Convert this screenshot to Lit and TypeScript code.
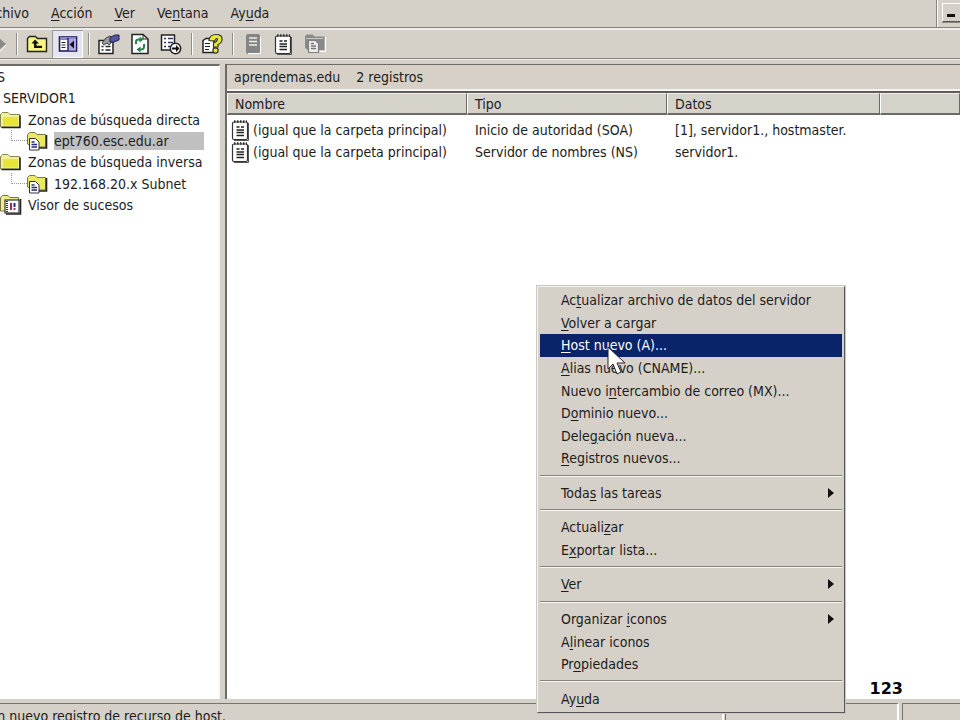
import { LitElement, html, css, svg } from "lit";
import { customElement } from "lit/decorators.js";
import { classMap } from "lit/directives/class-map.js";

const icons: Record<string, unknown> = {
  forward: svg`<path d="M-3 3 6 11 -3 19z" fill="#8a8a86"/><path d="M6 12-1 19.500" stroke="#fff" fill="none"/>`,
  up: svg`<path d="M1.500 18.500V5.500l2-2h6l2 2h9v13z" fill="#f7f583" stroke="#222" stroke-width="1.400"/><path d="M9 6.500 5.500 10.500h2.500v4.500h8v-2.200h-5.500v-2.300h2.500z" fill="#111"/>`,
  tree: svg`<rect x="2.500" y="4" width="17" height="14" fill="#fff" stroke="#1c1c5a" stroke-width="1.600"/><rect x="3" y="4" width="16" height="3" fill="#8484c8"/><rect x="11" y="6" width="8" height="11.500" fill="#a9a9dd"/><path d="M11 5v13" stroke="#1c1c5a" stroke-width="1.400"/><path d="M4.500 9.500h4M4.500 12h4M4.500 14.500h4" stroke="#223"/><path d="M17 7.500v8l-4.500-4z" fill="#111"/>`,
  props: svg`<path d="M1 7.500h14v13H1z" fill="#fff" stroke="#222" stroke-width="1.500"/><path d="M3.500 13.500h2M3.500 17h2M7.500 13.500h5M7.500 17h5" stroke="#222" stroke-width="1.500"/><path d="M4 10 8 5l4-2 3 2-1 4-3 3-2-2-3 2z" fill="#999" stroke="#444"/><path d="M12 4.500l5-2.500h4v5l-5 2-4 0z" fill="#56569e" stroke="#1d1d55"/>`,
  refresh: svg`<path d="M3 1.500h11l5 4.500v14.500H3z" fill="#fff" stroke="#222" stroke-width="1.500"/><path d="M14 1.500v4.500h5" fill="none" stroke="#222"/><path d="M7 11V8.500q0-2 3-2h1M15 11v3q0 2.500-4 2.500" fill="none" stroke="#208348" stroke-width="2"/><path d="M10.500 3.500v6l4-3zM11.500 13.500v6l-4-3z" fill="#208348"/>`,
  exportList: svg`<path d="M1.500 2h13v15h-13z" fill="#fff" stroke="#222" stroke-width="1.500"/><path d="M4 5.500h2M4 9.500h2M4 13.500h2M8 5.500h5M8 9.500h5M8 13.500h3" stroke="#33336e" stroke-width="1.500"/><circle cx="15.500" cy="15.500" r="5.200" fill="#fff" stroke="#222" stroke-width="1.500"/><path d="M12 14.500h4v-2.500l3.500 3.500-3.500 3.500V16.500h-4z" fill="#111"/>`,
  help: svg`<path d="M2 7.500 5 5.500h8v14H2z" fill="#fff" stroke="#222" stroke-width="1.500"/><path d="M4 10.500h5M4 13.500h5M4 16.500h4" stroke="#222"/><path d="M8 7.500q.5-6 7-6t6 5q0 3.500-4 5v2.500h-4.500v-4q3.500-1 4-3.500-.5-2-2 0l-1 1.500z" fill="#e8e92f" stroke="#333" stroke-width="1.200"/><circle cx="14.500" cy="17.500" r="2.600" fill="#e8e92f" stroke="#333" stroke-width="1.200"/>`,
  server: svg`<rect x="4" y="1" width="14" height="20" rx="2" fill="#858585"/><path d="M7 5h8M7 8.500h8M7 12h8" stroke="#ecece8" stroke-width="1.300"/><path d="M18.500 4v16.500H6" fill="none" stroke="#fff"/>`,
  record: svg`<rect x="2.500" y="3" width="15" height="17.500" rx="1.500" fill="#fff" stroke="#333" stroke-width="1.200"/><path d="M4 2.500h13" stroke="#333" stroke-width="2.500" stroke-dasharray="1.500 1.500"/><path d="M6.500 8h3M11 8h3M6.500 11h7.500M6.500 13.500h7.500M6.500 16.500h7.500" stroke="#222" stroke-width="1.400"/><path d="M18.500 4v17.500H4" fill="none" stroke="#555"/>`,
  zone: svg`<path d="M21.500 4v14.500H16" fill="none" stroke="#fff"/><path d="M1 15V3.500l1.500-2h6l2 2h10V17H4z" fill="#8a8a8a"/><path d="M2 5.500h17" stroke="#c8c8c4"/><path d="M4.500 7.500h7l3 3v9h-10z" fill="#eee" stroke="#808080" stroke-width="1.200"/><path d="M7 10.500h3M7 13h5M7 15.500h5" stroke="#777" stroke-width="1.300"/>`,
  folder: svg`<path d="M.5 16V4q0-1 1-1.500l1-1h5.500l2 2h9.500V16z" fill="#f1f198" stroke="#858555"/><path d="M3 6h15v8.500H3z" fill="#e5e437"/><path d="M20 4.500V16.500H1.500" fill="none" stroke="#222" stroke-width="1.600"/>`,
  zoneFolder: svg`<path d="M.5 13V3.500l2-2H8l2 2h8.500V16H6z" fill="#e9e866" stroke="#77774a"/><path d="M19.500 4v13H9" fill="none" stroke="#222" stroke-width="1.600"/><path d="M2.500 7.500h6l3.500 3.500v8H2.500z" fill="#fff" stroke="#333"/><path d="M4.500 11h3M4.500 13.500h5.500M4.500 16h5.500" stroke="#26267a" stroke-width="1.300"/>`,
  events: svg`<path d="M.5 16V2.500l2-2H8l2 2h8.500V16z" fill="#efee86" stroke="#77774a"/><path d="M20.500 4v15H6" fill="none" stroke="#222" stroke-width="1.600"/><rect x="5" y="5" width="14" height="13" fill="#fff" stroke="#333" stroke-width="1.200"/><path d="M7 6v12" stroke="#333" stroke-width="2" stroke-dasharray="1 1"/><path d="M11 8v7" stroke="#9b2d5d" stroke-width="2"/><path d="M14.500 8v4" stroke="#26267a" stroke-width="2"/><path d="M14.500 13v2" stroke="#9b2d5d" stroke-width="2"/>`,
};

const icon = (name: string, w = 22, h = 22) =>
  html`<svg width=${w} height=${h} viewBox="0 0 ${w} ${h}" aria-hidden="true">${icons[name]}</svg>`;

/* "_" marks the access key that follows it */
const label = (text: string) => {
  const at = text.indexOf("_");
  return at < 0
    ? html`<span>${text}</span>`
    : html`<span>${text.slice(0, at)}<u>${text[at + 1]}</u>${text.slice(at + 2)}</span>`;
};

interface Entry { text: string; sub?: boolean; active?: boolean }

const groups: Entry[][] = [
  [
    { text: "Ac_tualizar archivo de datos del servidor" },
    { text: "_Volver a cargar" },
    { text: "_Host nuevo (A)...", active: true },
    { text: "_Alias nuevo (CNAME)..." },
    { text: "Nuevo i_ntercambio de correo (MX)..." },
    { text: "D_ominio nuevo..." },
    { text: "Dele_gación nueva..." },
    { text: "_Registros nuevos..." },
  ],
  [{ text: "Toda_s las tareas", sub: true }],
  [{ text: "Actuali_zar" }, { text: "E_xportar lista..." }],
  [{ text: "_Ver", sub: true }],
  [{ text: "Organizar _iconos", sub: true }, { text: "A_linear iconos" }, { text: "Pr_opiedades" }],
  [{ text: "Ay_uda" }],
];

@customElement("context-menu")
class ContextMenu extends LitElement {
  static styles = css`
    :host {
      display: flex; flex-direction: column; box-sizing: border-box;
      width: 310px; height: 429px; padding: 2px; background: #d5d0c8;
      border: 2px solid; border-color: #f6f4f0 #56565a #56565a #f6f4f0;
      outline: 1px solid #c9c7c2; outline-offset: -1px;
    }
    button {
      flex: 1; display: flex; align-items: center; justify-content: space-between;
      min-height: 0; padding: 0 7px 0 21px; border: 0; background: none;
      font: inherit; color: #1c1c1c; text-align: left; white-space: nowrap;
    }
    .active { background: #0a246a; color: #fff; }
    hr {
      flex: none; width: 100%; height: 2px; margin: 5px 0; border: 0;
      background: linear-gradient(#85827c 50%, #f8f7f4 50%);
    }
    u { text-underline-offset: 2px; }
  `;
  render() {
    return groups.map((group, i) => html`
      ${i ? html`<hr />` : ""}
      ${group.map((e) => html`
        <button role="menuitem" class=${classMap({ active: !!e.active })}>
          ${label(e.text)}
          ${e.sub ? html`<svg width="8" height="12" aria-hidden="true"><path d="M1 1 7 6 1 11z" fill="#111" /></svg>` : ""}
        </button>`)}`);
  }
}

const records = [
  ["(igual que la carpeta principal)", "Inicio de autoridad (SOA)", "[1], servidor1., hostmaster."],
  ["(igual que la carpeta principal)", "Servidor de nombres (NS)", "servidor1."],
];

@customElement("app-root")
class AppRoot extends LitElement {
  static styles = css`
    :host {
      display: flex; flex-direction: column; position: relative; overflow: hidden;
      height: 100vh; background: #d5d1c9; color: #1c1c1c;
      font: 14px/16px "DejaVu Sans Condensed", "Noto Sans", sans-serif;
    }
    button { font: inherit; color: inherit; background: none; border: 0; padding: 0; white-space: nowrap; }
    svg { flex: none; display: block; }
    u { text-underline-offset: 2px; }
    .menubar { display: flex; height: 27px; border-bottom: 1px solid #85837d; flex: none; }
    .menus { display: flex; flex: 1; gap: 22px; padding-bottom: 2px; border-right: 1px solid #85837d; }
    .cut { display: flex; justify-content: flex-end; align-items: center; overflow: hidden; }
    .first { width: 29px; }
    .controls { width: 18px; padding-left: 4px; border-left: 1px solid #fff; overflow: hidden; }
    .minimize {
      display: flex; align-items: flex-end; width: 22px; height: 19px; margin-top: 3px; padding: 0 0 4px 4px;
      border: 1px solid; border-color: #fff #555 #555 #fff; box-shadow: 0 1px #8a8882;
    }
    .toolbar {
      display: flex; align-items: center; flex: none; height: 31px;
      border-top: 2px solid #efede9; border-bottom: 1px solid #85837d;
      box-sizing: border-box;
    }
    .toolbar button { display: grid; place-items: center; width: 31px; height: 28px; }
    .toolbar .edge { width: 11px; overflow: hidden; justify-content: start; }
    .toolbar .pressed { background: #e5e4ef; box-shadow: inset 1px 1px #9a98a0, inset -1px -1px #fff; }
    .rule { width: 1px; height: 22px; background: #8f8d87; border-right: 1px solid #fff; margin: 0 3px 0 5px; }
    .panes { display: flex; flex: 1; min-height: 0; padding-top: 4px; border-top: 1px solid #efede9; }
    .tree {
      box-sizing: border-box; width: 220px; flex: none; overflow: hidden; background: #fff;
      border-top: 2px solid #6d6b66; border-right: 1px solid #f6f5f2;
    }
    .nodes { display: grid; grid-auto-rows: 1fr; height: 150px; margin: 0; padding: 0; list-style: none; }
    .nodes li { display: flex; align-items: center; gap: 6px; }
    .nodes .root { width: 5px; }
    .nodes .server { padding-left: 3px; }
    .child { padding-left: 11px; }
    .branch { align-self: flex-start; width: 15px; height: 10px; margin-right: -6px; border: 1px dotted #999; border-width: 0 0 1px 1px; }
    .selected { width: 150px; height: 18px; background: #c0c0c0; text-align: left; }
    .list {
      flex: 1; min-width: 0; margin-left: 5px; display: flex; flex-direction: column; background: #fff;
      border-left: 2px solid #6d6b66; border-top: 1px solid #6d6b66;
    }
    .caption { display: flex; gap: 16px; align-items: center; height: 24px; padding-left: 7px; background: #d6d0c7; border-bottom: 2px solid #f6f5f2; }
    table { width: 100%; border-collapse: separate; border-spacing: 0; table-layout: fixed; border-top: 2px solid #5f5d59; }
    th {
      box-sizing: border-box; height: 22px; padding: 0 0 0 7px; text-align: left; font-weight: normal; background: #d5d2ca;
      border: 1px solid; border-color: #efede9 #6d6b66 #6d6b66 #fff; border-bottom-width: 2px;
    }
    .name { width: 240px; }
    .type { width: 200px; }
    .data { width: 213px; }
    .rest { width: auto; }
    td { height: 22px; padding: 0 0 0 8px; white-space: nowrap; }
    .lead td { height: 23px; padding-top: 3px; }
    .cell { display: flex; align-items: center; gap: 3px; margin-left: -5px; }
    .status { display: flex; flex: none; height: 17px; margin-top: 4px; overflow: hidden; }
    .status div { box-sizing: border-box; height: 24px; border-top: 1px solid #76746f; border-left: 1px solid #76746f; border-right: 2px solid #fff; padding-top: 3px; }
    .status .message { flex: 1; border-left: 0; }
    .message .cut { border: 0; padding: 0; width: 226px; height: 18px; white-space: nowrap; }
    .status .second { width: 174px; margin-left: 1px; }
    .status .third { width: 58px; border-right: 0; margin-left: 3px; }
    context-menu { position: absolute; left: 536px; top: 285px; }
    .pointer { position: absolute; left: 607px; top: 346px; }
    .page { position: absolute; right: 57px; bottom: 21px; font: bold 16px/20px "DejaVu Sans", sans-serif; color: #000; }
  `;

  private tool(name: string, title: string, cls = "") {
    return html`<button class=${cls} aria-label=${title}>${icon(name)}</button>`;
  }

  render() {
    return html`
      <nav class="menubar">
        <div class="menus">
          <button class="cut first">Archivo</button>
          ${["_Acción", "_Ver", "Ve_ntana", "Ay_uda"].map((t) => html`<button>${label(t)}</button>`)}
        </div>
        <div class="controls">
          <button class="minimize" aria-label="Minimizar"><svg width="8" height="3"><path d="M0 0h8v3H0z" fill="#111" /></svg></button>
        </div>
      </nav>
      <div class="toolbar">
        ${this.tool("forward", "Adelante", "edge")}
        <span class="rule"></span>
        ${this.tool("up", "Subir un nivel")}
        ${this.tool("tree", "Mostrar u ocultar árbol", "pressed")}
        <span class="rule"></span>
        ${this.tool("props", "Propiedades")}
        ${this.tool("refresh", "Actualizar")}
        ${this.tool("exportList", "Exportar lista")}
        <span class="rule"></span>
        ${this.tool("help", "Ayuda")}
        <span class="rule"></span>
        ${this.tool("server", "Servidor nuevo")}
        ${this.tool("record", "Registro nuevo")}
        ${this.tool("zone", "Zona nueva")}
      </div>
      <main class="panes">
        <div class="tree">
          <ul class="nodes">
            <li><button class="cut root">DNS</button></li>
            <li class="server"><button>SERVIDOR1</button></li>
            <li>${icon("folder", 22, 18)}<button>Zonas de búsqueda directa</button></li>
            <li class="child"><span class="branch"></span>${icon("zoneFolder", 21, 20)}<button class="selected">ept760.esc.edu.ar</button></li>
            <li>${icon("folder", 22, 18)}<button>Zonas de búsqueda inversa</button></li>
            <li class="child"><span class="branch"></span>${icon("zoneFolder", 21, 20)}<button>192.168.20.x Subnet</button></li>
            <li>${icon("events", 22, 20)}<button>Visor de sucesos</button></li>
          </ul>
        </div>
        <section class="list">
          <div class="caption"><span>aprendemas.edu</span><span>2 registros</span></div>
          <table>
            <thead>
              <tr><th class="name">Nombre</th><th class="type">Tipo</th><th class="data">Datos</th><th class="rest"></th></tr>
            </thead>
            <tbody>
              ${records.map((r, i) => html`
                <tr class=${classMap({ lead: i === 0 })}>
                  <td><div class="cell">${icon("record", 20, 22)}${r[0]}</div></td><td>${r[1]}</td><td>${r[2]}</td><td></td>
                </tr>`)}
            </tbody>
          </table>
        </section>
      </main>
      <footer class="status">
        <div class="message"><div class="cut">Crea un nuevo registro de recurso de host.</div></div>
        <div class="second"></div>
        <div class="third"></div>
      </footer>
      <span class="page">123</span>
      <context-menu role="menu"></context-menu>
      <svg class="pointer" width="20" height="30" viewBox="0 0 20 30" aria-hidden="true">
        <path d="M1 1v22l5-5 4 10 4-2-4-9h8z" fill="#fff" stroke="#222" />
      </svg>
    `;
  }
}
